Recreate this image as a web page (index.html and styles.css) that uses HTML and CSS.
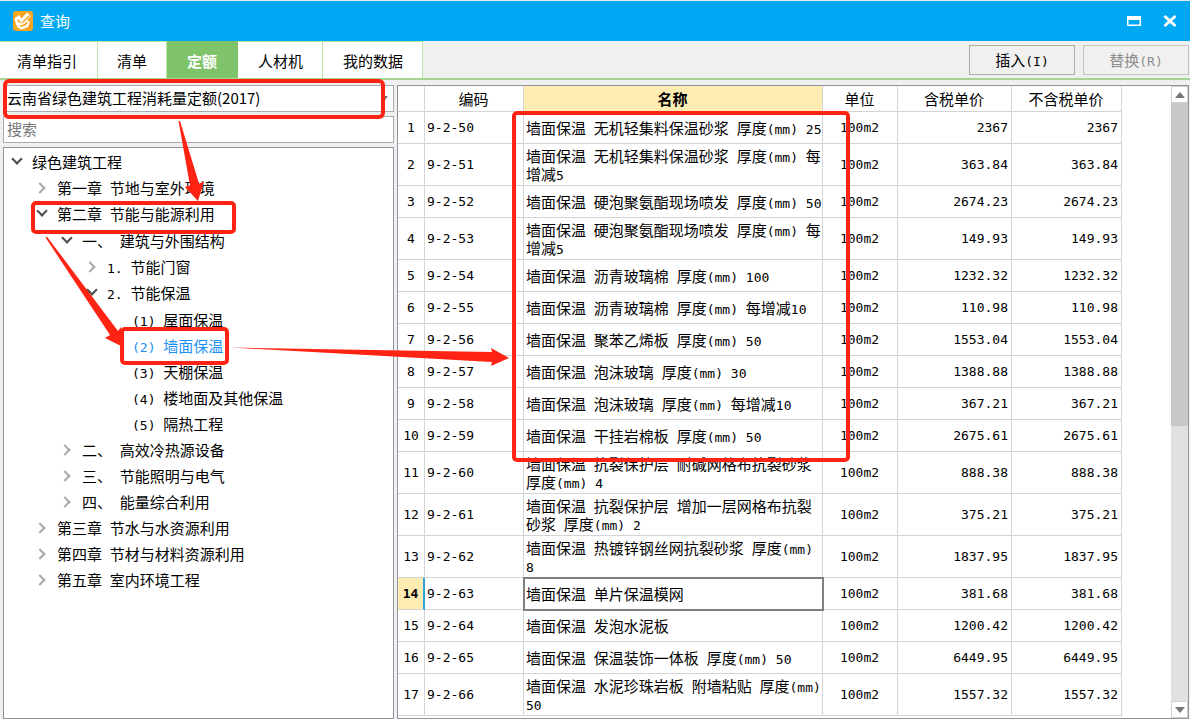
FILE: index.html
```
<!DOCTYPE html>
<html lang="zh-CN">
<head>
<meta charset="utf-8">
<title>查询</title>
<link rel="stylesheet" href="styles.css">
</head>
<body>
<div class="window">
  <header class="titlebar">
    <svg class="logo" width="20" height="20" viewBox="0 0 20 20" aria-hidden="true">
      <rect width="20" height="20" rx="3" fill="#f7a521"/>
      <path d="M1.500 7.500L6 4l2.500 3.500L14 1.500l4 3.500-4 4 3 2-2 5-6 2.500-4.500-2L2.500 12z" fill="#fff"/>
      <path d="M4.500 8.500l3 3.500M16.500 4.500L9 12M7 14.500c3 .8 5.500-.5 7.500-3.500" fill="none" stroke="#f7a521" stroke-width="1.500"/>
    </svg>
    <h1 class="title">查询</h1>
    <button class="winbtn" aria-label="最大化"><svg width="14" height="10" viewBox="0 0 14 10"><path d="M0 0h14v10H0zM1.500 4v4.500h11V4z" fill="#fff" fill-rule="evenodd"/></svg></button>
    <button class="winbtn" aria-label="关闭"><svg width="14" height="12" viewBox="0 0 14 12"><path d="M1.500 1l11 10M12.500 1l-11 10" stroke="#fff" stroke-width="2.800"/></svg></button>
  </header>

  <div class="toolbar">
    <nav class="tabs">
      <button class="tab">清单指引</button>
      <button class="tab">清单</button>
      <button class="tab active">定额</button>
      <button class="tab">人材机</button>
      <button class="tab">我的数据</button>
    </nav>
    <div class="actions">
      <button class="action">插入<span class="m">(I)</span></button>
      <button class="action" disabled>替换<span class="m">(R)</span></button>
    </div>
  </div>

  <main class="content">
    <aside class="side">
      <div class="combo">
        <select class="field" aria-label="定额库"><option>云南省绿色建筑工程消耗量定额(2017)</option></select>
        <svg class="caret" width="7" height="5" viewBox="0 0 7 5"><path d="M0 0h7L3.500 5z" fill="#777"/></svg>
      </div>
      <input class="field" type="text" placeholder="搜索" aria-label="搜索">
      <div class="treebox">
        <ul class="tree">
          <li><div class="node"><i class="open"></i>绿色建筑工程</div>
            <ul>
              <li><div class="node"><i class="shut"></i>第一章<span class="m"> </span>节地与室外环境</div></li>
              <li><div class="node"><i class="open"></i>第二章<span class="m"> </span>节能与能源利用</div>
                <ul class="sub">
                  <li><div class="node"><i class="open"></i>一、<span class="m"> </span>建筑与外围结构</div>
                    <ul>
                      <li><div class="node"><i class="shut"></i><span class="m">1. </span>节能门窗</div></li>
                      <li><div class="node"><i class="open"></i><span class="m">2. </span>节能保温</div>
                        <ul class="sub">
                          <li><div class="node"><i></i><span class="m">(1) </span>屋面保温</div></li>
                          <li><div class="node selected"><i></i><span class="m">(2) </span>墙面保温</div></li>
                          <li><div class="node"><i></i><span class="m">(3) </span>天棚保温</div></li>
                          <li><div class="node"><i></i><span class="m">(4) </span>楼地面及其他保温</div></li>
                          <li><div class="node"><i></i><span class="m">(5) </span>隔热工程</div></li>
                        </ul>
                      </li>
                    </ul>
                  </li>
                  <li><div class="node"><i class="shut"></i>二、<span class="m"> </span>高效冷热源设备</div></li>
                  <li><div class="node"><i class="shut"></i>三、<span class="m"> </span>节能照明与电气</div></li>
                  <li><div class="node"><i class="shut"></i>四、<span class="m"> </span>能量综合利用</div></li>
                </ul>
              </li>
              <li><div class="node"><i class="shut"></i>第三章<span class="m"> </span>节水与水资源利用</div></li>
              <li><div class="node"><i class="shut"></i>第四章<span class="m"> </span>节材与材料资源利用</div></li>
              <li><div class="node"><i class="shut"></i>第五章<span class="m"> </span>室内环境工程</div></li>
            </ul>
          </li>
        </ul>
      </div>
    </aside>

    <section class="gridbox">
      <div class="gridscroll">
      <table class="grid">
        <colgroup><col class="c-no"><col class="c-code"><col class="c-name"><col class="c-unit"><col class="c-tax"><col class="c-net"></colgroup>
        <thead><tr><th></th><th>编码</th><th class="current">名称</th><th>单位</th><th>含税单价</th><th>不含税单价</th></tr></thead>
        <tbody>
          <tr><th>1</th><td>9-2-50</td><td class="name">墙面保温<span class="m"> </span>无机轻集料保温砂浆<span class="m"> </span>厚度<span class="m">(mm) 25</span></td><td class="unit">100m2</td><td class="num">2367</td><td class="num">2367</td></tr>
          <tr class="tall"><th>2</th><td>9-2-51</td><td class="name">墙面保温<span class="m"> </span>无机轻集料保温砂浆<span class="m"> </span>厚度<span class="m">(mm) </span>每<br>增减<span class="m">5</span></td><td class="unit">100m2</td><td class="num">363.84</td><td class="num">363.84</td></tr>
          <tr><th>3</th><td>9-2-52</td><td class="name">墙面保温<span class="m"> </span>硬泡聚氨酯现场喷发<span class="m"> </span>厚度<span class="m">(mm) 50</span></td><td class="unit">100m2</td><td class="num">2674.23</td><td class="num">2674.23</td></tr>
          <tr class="tall"><th>4</th><td>9-2-53</td><td class="name">墙面保温<span class="m"> </span>硬泡聚氨酯现场喷发<span class="m"> </span>厚度<span class="m">(mm) </span>每<br>增减<span class="m">5</span></td><td class="unit">100m2</td><td class="num">149.93</td><td class="num">149.93</td></tr>
          <tr><th>5</th><td>9-2-54</td><td class="name">墙面保温<span class="m"> </span>沥青玻璃棉<span class="m"> </span>厚度<span class="m">(mm) 100</span></td><td class="unit">100m2</td><td class="num">1232.32</td><td class="num">1232.32</td></tr>
          <tr><th>6</th><td>9-2-55</td><td class="name">墙面保温<span class="m"> </span>沥青玻璃棉<span class="m"> </span>厚度<span class="m">(mm) </span>每增减<span class="m">10</span></td><td class="unit">100m2</td><td class="num">110.98</td><td class="num">110.98</td></tr>
          <tr><th>7</th><td>9-2-56</td><td class="name">墙面保温<span class="m"> </span>聚苯乙烯板<span class="m"> </span>厚度<span class="m">(mm) 50</span></td><td class="unit">100m2</td><td class="num">1553.04</td><td class="num">1553.04</td></tr>
          <tr><th>8</th><td>9-2-57</td><td class="name">墙面保温<span class="m"> </span>泡沫玻璃<span class="m"> </span>厚度<span class="m">(mm) 30</span></td><td class="unit">100m2</td><td class="num">1388.88</td><td class="num">1388.88</td></tr>
          <tr><th>9</th><td>9-2-58</td><td class="name">墙面保温<span class="m"> </span>泡沫玻璃<span class="m"> </span>厚度<span class="m">(mm) </span>每增减<span class="m">10</span></td><td class="unit">100m2</td><td class="num">367.21</td><td class="num">367.21</td></tr>
          <tr><th>10</th><td>9-2-59</td><td class="name">墙面保温<span class="m"> </span>干挂岩棉板<span class="m"> </span>厚度<span class="m">(mm) 50</span></td><td class="unit">100m2</td><td class="num">2675.61</td><td class="num">2675.61</td></tr>
          <tr class="tall"><th>11</th><td>9-2-60</td><td class="name">墙面保温<span class="m"> </span>抗裂保护层<span class="m"> </span>耐碱网格布抗裂砂浆<br>厚度<span class="m">(mm) 4</span></td><td class="unit">100m2</td><td class="num">888.38</td><td class="num">888.38</td></tr>
          <tr class="tall"><th>12</th><td>9-2-61</td><td class="name">墙面保温<span class="m"> </span>抗裂保护层<span class="m"> </span>增加一层网格布抗裂<br>砂浆<span class="m"> </span>厚度<span class="m">(mm) 2</span></td><td class="unit">100m2</td><td class="num">375.21</td><td class="num">375.21</td></tr>
          <tr class="tall"><th>13</th><td>9-2-62</td><td class="name">墙面保温<span class="m"> </span>热镀锌钢丝网抗裂砂浆<span class="m"> </span>厚度<span class="m">(mm)</span><br><span class="m">8</span></td><td class="unit">100m2</td><td class="num">1837.95</td><td class="num">1837.95</td></tr>
          <tr class="picked"><th>14</th><td>9-2-63</td><td class="name">墙面保温<span class="m"> </span>单片保温模网</td><td class="unit">100m2</td><td class="num">381.68</td><td class="num">381.68</td></tr>
          <tr><th>15</th><td>9-2-64</td><td class="name">墙面保温<span class="m"> </span>发泡水泥板</td><td class="unit">100m2</td><td class="num">1200.42</td><td class="num">1200.42</td></tr>
          <tr><th>16</th><td>9-2-65</td><td class="name">墙面保温<span class="m"> </span>保温装饰一体板<span class="m"> </span>厚度<span class="m">(mm) 50</span></td><td class="unit">100m2</td><td class="num">6449.95</td><td class="num">6449.95</td></tr>
          <tr class="tall"><th>17</th><td>9-2-66</td><td class="name">墙面保温<span class="m"> </span>水泥珍珠岩板<span class="m"> </span>附墙粘贴<span class="m"> </span>厚度<span class="m">(mm)</span><br><span class="m">50</span></td><td class="unit">100m2</td><td class="num">1557.32</td><td class="num">1557.32</td></tr>
        </tbody>
      </table>
      </div>
      <div class="scrollbar">
        <button class="step" aria-label="向上滚动"><svg width="10" height="6" viewBox="0 0 10 6"><path d="M0 6l5-6 5 6z" fill="#777"/></svg></button>
        <div class="track"><div class="thumb"></div></div>
        <button class="step" aria-label="向下滚动"><svg width="10" height="6" viewBox="0 0 10 6"><path d="M0 0h10L5 6z" fill="#777"/></svg></button>
      </div>
    </section>
  </main>

  <svg class="marks" width="860" height="470" viewBox="0 0 860 470" aria-hidden="true">
    <g fill="none" stroke="#ff2313" stroke-width="4">
      <rect x="5" y="81" width="378" height="36" rx="4"/>
      <rect x="33" y="203" width="201" height="29" rx="3"/>
      <rect x="122" y="329" width="105" height="34" rx="3"/>
      <rect x="514" y="113" width="334" height="347" rx="3"/>
    </g>
    <g fill="#ff2313">
      <path d="M178.500 121h1.500L199 183.500L204 181.500L198 201L185 187L190 185.500z"/>
      <path d="M45.500 237.500l1.500-.8L118 331L121 327L121 346L105 338L110 335z"/>
      <path d="M231 347.500L492 352L491 348L509 358L491 366L492 362z"/>
    </g>
  </svg>
</div>
</body>
</html>
```
FILE: styles.css
```
* { box-sizing: border-box; }

body {
  margin: 0;
  background: #f0f0f0;
  color: #000;
  font: 15px/18px "Noto Sans CJK SC", sans-serif;
}

button, input, select { font: inherit; color: inherit; }
ul { margin: 0; padding: 0; list-style: none; }

.m {
  font-family: "DejaVu Sans Mono", monospace;
  font-size: 13px;
  line-height: 1;
  white-space: pre;
}

.window {
  position: relative;
  display: flex;
  flex-direction: column;
  height: 100vh;
  overflow: hidden;
}

.titlebar {
  display: flex;
  align-items: center;
  height: 41px;
  padding: 0 6px 0 13px;
  border-top: 1px solid #e8e8e8;
  background: #00a8f3;
  color: #fff;
}
.title {
  flex: 1;
  margin: 0 0 0 7px;
  font-size: 15px;
  font-weight: 400;
}
.winbtn {
  display: grid;
  place-items: center;
  width: 28px;
  height: 24px;
  margin-left: 8px;
  padding: 0;
  border: 0;
  background: none;
}

.toolbar {
  display: flex;
  justify-content: space-between;
  height: 39px;
  border-bottom: 2px solid #a5d594;
}
.tabs { display: flex; }
.tab {
  padding: 3px 19px 2px;
  border: solid #b9e8a6;
  border-width: 1px 1px 0 0;
  background: #fff;
}
.tab:first-child { padding: 3px 20px 2px 17px; }
.tab:nth-child(4) { padding: 3px 19px 2px 20px; }
.tab.active {
  padding: 3px 20px 2px;
  border-color: #7fc36a;
  background: #7fc36a;
  color: #fff;
  font-weight: 700;
}
.tab:last-child { padding: 3px 19px 2px 20px; }
.actions {
  display: flex;
  gap: 8px;
  padding: 4px 1px 3px 0;
}
.action {
  width: 106px;
  padding: 0;
  border: 1px solid #adadad;
  background: #f0f0f0;
}
.action:disabled { border-color: #c4c4c4; color: #8c8c8c; }

.content {
  display: flex;
  flex: 1;
  gap: 3px;
  min-height: 0;
  padding: 5px 1px 0 3px;
}

.side {
  display: flex;
  flex: 0 0 391px;
  flex-direction: column;
  gap: 4px;
}
.combo { display: grid; align-items: center; }
.combo > * { grid-area: 1 / 1; }
.caret { justify-self: end; margin-right: 6px; }
.field {
  width: 100%;
  height: 27px;
  padding: 0 3px 2px;
  border: 1px solid #a9abb0;
  border-radius: 0;
  background: #fff;
  appearance: none;
}
.field::placeholder { color: #777; opacity: 1; }

.treebox {
  flex: 1;
  min-height: 0;
  border: 1px solid #8e959e;
  background: #fff;
  overflow: hidden;
}
.tree { padding-top: 1px; }
.tree ul { padding-left: 25px; }
.tree .sub { padding-top: 1px; }
.node {
  height: 26px;
  padding-left: 6px;
  line-height: 26px;
  white-space: nowrap;
}
.node i {
  display: grid;
  float: left;
  place-items: center;
  width: 22px;
  height: 26px;
}
.node i::before {
  width: 6px;
  height: 6px;
  border: solid #aaa;
  border-width: 2px 2px 0 0;
}
.node .shut { padding-right: 8px; }
.node .open { padding: 0 8px 6px 0; }
.node .shut::before { content: ""; margin-right: 4px; transform: rotate(45deg); }
.node .open::before { content: ""; border-color: #4d4d4d; transform: rotate(135deg); }
.selected { color: #1a91f0; }

.gridbox {
  display: flex;
  flex: 1;
  min-width: 0;
  border: 1px solid #8e959e;
  background: #fff;
}
.gridscroll { flex: 1; min-width: 0; overflow: hidden; }
.grid {
  width: 724px;
  border-collapse: separate;
  border-spacing: 0;
  table-layout: fixed;
}
.c-no { width: 27px; }
.c-code { width: 99px; }
.c-name { width: 299px; }
.c-unit { width: 75px; }
.c-tax { width: 114px; }
.c-net { width: 110px; }
.grid th, .grid td {
  height: 32px;
  padding: 0 3px 0 2px;
  border: solid #d4d4d4;
  border-width: 0 1px 1px 0;
  font-family: "DejaVu Sans Mono", monospace;
  font-size: 13px;
  font-weight: 400;
  text-align: left;
  white-space: nowrap;
}
.grid thead th {
  height: 26px;
  font-family: "Noto Sans CJK SC", sans-serif;
  font-size: 15px;
  text-align: center;
}
.grid thead .current {
  border-bottom-color: #8a8a8a;
  background: #ffecb3;
  font-weight: 700;
}
.grid tbody th { padding: 0; text-align: center; }
.grid .tall td { height: 42px; }
.grid .name {
  padding-right: 0;
  font-family: "Noto Sans CJK SC", sans-serif;
  font-size: 15px;
}
.grid .unit { text-align: center; }
.grid .num { text-align: right; }
.grid .picked th {
  border-right: 2px solid #2ba3dc;
  background: #ffecb3;
  font-weight: 700;
}
.grid .picked .name { outline: 2px solid #808080; outline-offset: -1px; }

.scrollbar {
  display: flex;
  flex-direction: column;
  width: 17px;
  background: #e1e1e1;
}
.step {
  display: grid;
  place-items: center;
  height: 17px;
  padding: 0;
  border: 1px solid #d0d0d0;
  background: #fff;
}
.track { flex: 1; }
.thumb { height: 54%; background: #c8c8c8; }

.marks {
  position: absolute;
  top: 0;
  left: 0;
  pointer-events: none;
}
```
